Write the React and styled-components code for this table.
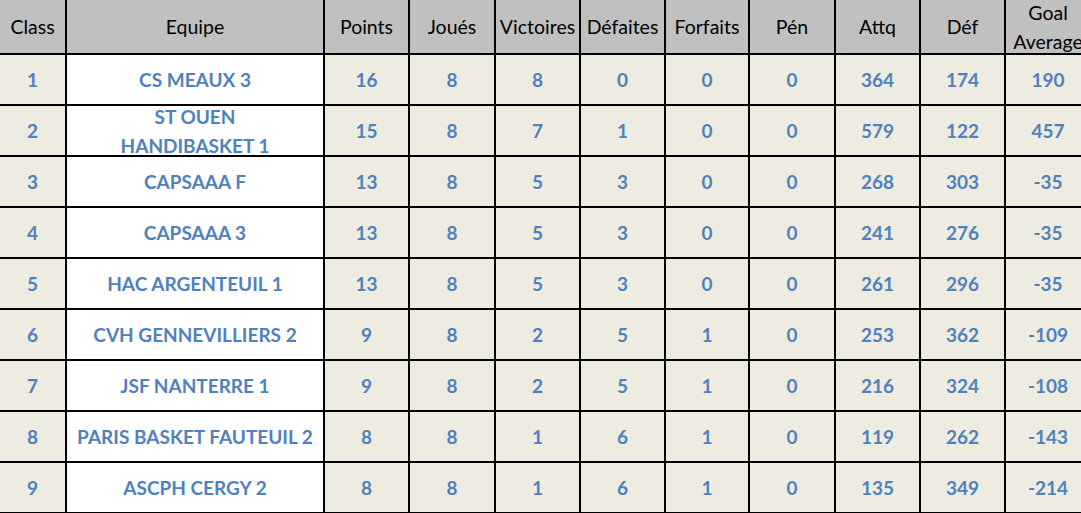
import React from 'react';
import styled, { createGlobalStyle } from 'styled-components';

const GlobalStyle = createGlobalStyle`
  html, body {
    margin: 0;
    padding: 0;
    background: #ffffff;
  }
`;

const Frame = styled.div`
  width: 1081px;
  height: 513px;
  overflow: hidden;
  background: #ffffff;
  font-family: Lato, 'Open Sans', sans-serif;
`;

const Grid = styled.div`
  display: grid;
  width: 1090px;
  grid-template-columns: 65px 256px 83px 84px 83px 83px 82px 84px 83px 83px 84px;
  grid-template-rows: 53px repeat(9, 49px);
  gap: 2px;
  padding-bottom: 2px;
  background: #000;
`;

const HeadCell = styled.div`
  display: flex;
  align-items: center;
  justify-content: center;
  background: #c0c0c0;
  color: #000;
  font-size: 19.5px;
  font-weight: 400;
  line-height: 29px;
  text-align: center;
  white-space: pre-line;
`;

const Cell = styled.div`
  display: flex;
  align-items: center;
  justify-content: center;
  background: ${(p) => (p.$team ? '#ffffff' : '#eeece1')};
  color: #4f81bd;
  font-size: 19px;
  font-weight: 700;
  line-height: 29px;
  text-align: center;
  white-space: pre-line;
  overflow: visible;
`;

const columns = [
  'Class',
  'Equipe',
  'Points',
  'Joués',
  'Victoires',
  'Défaites',
  'Forfaits',
  'Pén',
  'Attq',
  'Déf',
  'Goal\nAverage',
];

const rows = [
  [1, 'CS MEAUX 3', 16, 8, 8, 0, 0, 0, 364, 174, 190],
  [2, 'ST OUEN\nHANDIBASKET 1', 15, 8, 7, 1, 0, 0, 579, 122, 457],
  [3, 'CAPSAAA F', 13, 8, 5, 3, 0, 0, 268, 303, -35],
  [4, 'CAPSAAA 3', 13, 8, 5, 3, 0, 0, 241, 276, -35],
  [5, 'HAC ARGENTEUIL 1', 13, 8, 5, 3, 0, 0, 261, 296, -35],
  [6, 'CVH GENNEVILLIERS 2', 9, 8, 2, 5, 1, 0, 253, 362, -109],
  [7, 'JSF NANTERRE 1', 9, 8, 2, 5, 1, 0, 216, 324, -108],
  [8, 'PARIS BASKET FAUTEUIL 2', 8, 8, 1, 6, 1, 0, 119, 262, -143],
  [9, 'ASCPH CERGY 2', 8, 8, 1, 6, 1, 0, 135, 349, -214],
];

export default function App() {
  return (
    <Frame>
      <GlobalStyle />
      <Grid>
        {columns.map((c) => (
          <HeadCell key={c}>{c}</HeadCell>
        ))}
        {rows.map((row) =>
          row.map((v, i) => (
            <Cell key={`${row[0]}-${i}`} $team={i === 1}>
              {v}
            </Cell>
          ))
        )}
      </Grid>
    </Frame>
  );
}
